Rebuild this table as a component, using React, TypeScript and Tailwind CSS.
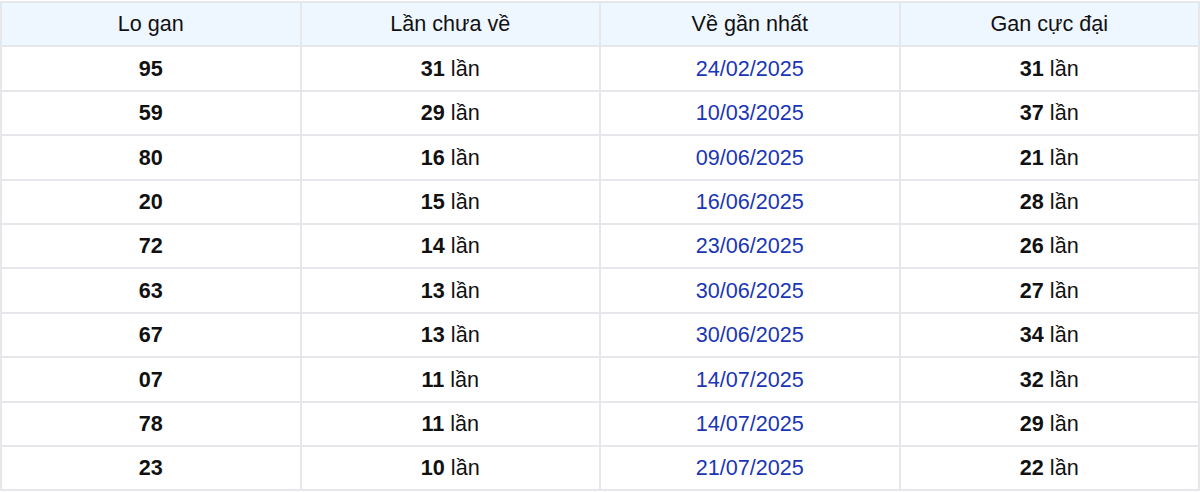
import React from "react";

const rows = [
    { lo: "95", chua: "31", ve: "24/02/2025", max: "31" },
    { lo: "59", chua: "29", ve: "10/03/2025", max: "37" },
    { lo: "80", chua: "16", ve: "09/06/2025", max: "21" },
    { lo: "20", chua: "15", ve: "16/06/2025", max: "28" },
    { lo: "72", chua: "14", ve: "23/06/2025", max: "26" },
    { lo: "63", chua: "13", ve: "30/06/2025", max: "27" },
    { lo: "67", chua: "13", ve: "30/06/2025", max: "34" },
    { lo: "07", chua: "11", ve: "14/07/2025", max: "32" },
    { lo: "78", chua: "11", ve: "14/07/2025", max: "29" },
    { lo: "23", chua: "10", ve: "21/07/2025", max: "22" },
];

const cell = "border-2 border-[#e6e7eb] text-center align-middle h-[44.4px] p-0 leading-none";

export default function App() {
    return (
        <div className="w-[1200px] pt-[1px] bg-white text-[21.6px] text-[#111] font-['Liberation_Sans',Arial,sans-serif]">
            <table className="w-full border-collapse table-fixed">
                <thead>
                    <tr className="bg-[#eef6ff]">
                        <th className={`${cell} font-normal`}>Lo gan</th>
                        <th className={`${cell} font-normal`}>Lần chưa về</th>
                        <th className={`${cell} font-normal`}>Về gần nhất</th>
                        <th className={`${cell} font-normal`}>Gan cực đại</th>
                    </tr>
                </thead>
                <tbody>
                    {rows.map((r, i) => (
                        <tr key={i}>
                            <td className={`${cell} font-bold`}>{r.lo}</td>
                            <td className={cell}>
                                <b>{r.chua}</b> lần
                            </td>
                            <td className={`${cell} text-[#1a36b4]`}>{r.ve}</td>
                            <td className={cell}>
                                <b>{r.max}</b> lần
                            </td>
                        </tr>
                    ))}
                </tbody>
            </table>
        </div>
    );
}
